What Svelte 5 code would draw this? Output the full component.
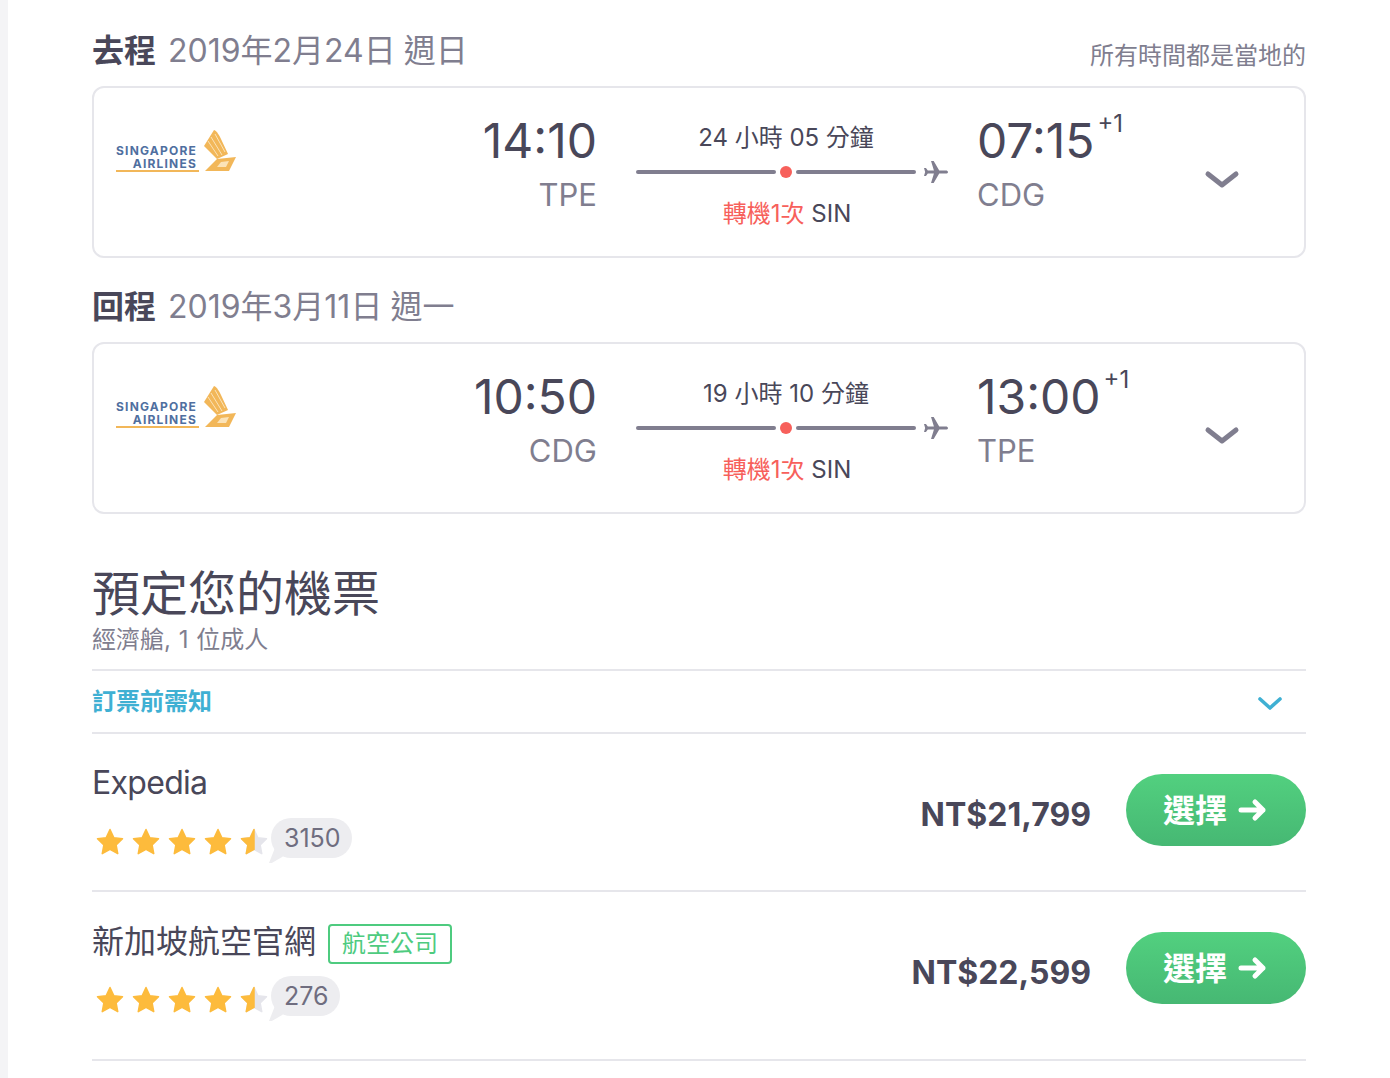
<script>
  const legs = [
    { label: '去程', date: '2019年2月24日 週日', note: '所有時間都是當地的', dep: '14:10', from: 'TPE', dur: '24 小時 05 分鐘', arr: '07:15', to: 'CDG' },
    { label: '回程', date: '2019年3月11日 週一', note: '', dep: '10:50', from: 'CDG', dur: '19 小時 10 分鐘', arr: '13:00', to: 'TPE' }
  ];
  const offers = [
    { name: '', latin: 'Expedia', tag: '', price: 'NT$21,799', count: '3150' },
    { name: '新加坡航空官網', latin: '', tag: '航空公司', price: 'NT$22,599', count: '276' }
  ];
  const star = 'M12 2l3 6.500 7 .9-5.100 4.900 1.300 7L12 17.900l-6.200 3.400 1.300-7L2 9.400l7-.9z';
</script>

<div class="page">
  <main class="main">
    {#each legs as leg}
      <section class="leg">
        <header class="leg-head">
          <h2><b>{leg.label}</b><span>{leg.date}</span></h2>
          {#if leg.note}<small>{leg.note}</small>{/if}
        </header>
        <div class="card">
          <div class="logo">
            <div class="logo-text"><span>SINGAPORE</span><span>AIRLINES</span></div>
            <svg class="wing" width="34" height="44" viewBox="0 0 34 44">
              <path d="M11 2c3 1 5 5 7 9l7 15-11 5L1 18z" fill="#f2b759"/>
              <path d="M8 9l11 18M5 13l10 15M12 6l10 18" stroke="#fbe3b8" stroke-width="1" fill="none"/>
              <path d="M14 31l19-2-7 14H2z" fill="#f2b759"/>
              <path d="M14 39h9l3-6-8 1z" fill="#fbe3b8"/>
            </svg>
          </div>
          <div class="time dep">
            <div class="clock">{leg.dep}</div>
            <div class="code">{leg.from}</div>
          </div>
          <div class="route">
            <div class="dur">{leg.dur}</div>
            <div class="line">
              <i></i><em></em><i></i>
              <svg width="24" height="26" viewBox="2 1 20.800 22"><path d="M22.800 12c0-.9-.9-1.400-1.800-1.400h-5.800L10.400 2.500H8.100l2.500 8.100H5.300L3.700 8.500H2l1 3.500-1 3.500h1.700l1.600-2.100h5.300l-2.500 8.100h2.300l4.800-8.100H21c.9 0 1.800-.5 1.800-1.400z" fill="#807e8f"/></svg>
            </div>
            <div class="stop"><span>轉機1次</span> SIN</div>
          </div>
          <div class="time arr">
            <div class="clock">{leg.arr}<sup>+1</sup></div>
            <div class="code">{leg.to}</div>
          </div>
          <svg class="chev" width="36" height="20" viewBox="0 0 36 20"><path d="M4 4l14 11L32 4" fill="none" stroke="#807e8f" stroke-width="5" stroke-linecap="round" stroke-linejoin="round"/></svg>
        </div>
      </section>
    {/each}

    <section class="book">
      <h1>預定您的機票</h1>
      <p>經濟艙, 1 位成人</p>
    </section>

    <div class="notice">
      <span>訂票前需知</span>
      <svg class="notice-chev" width="28" height="16" viewBox="0 0 28 16"><path d="M4 4l10 9L24 4" fill="none" stroke="#3fb0d3" stroke-width="3.600" stroke-linecap="round" stroke-linejoin="round"/></svg>
    </div>

    {#each offers as o}
      <div class="offer">
        <div class="who">
          <div class="name">{#if o.latin}<span class="latin">{o.latin}</span>{/if}{o.name}{#if o.tag}<span class="tag">{o.tag}</span>{/if}</div>
          <div class="rating">
            <div class="stars">
              {#each [0, 1, 2, 3] as s}
                <svg width="36" height="30" viewBox="-2.400 0 28.800 24"><path d={star} fill="#fdbb3c" stroke="#fdbb3c" stroke-width="1.200" stroke-linejoin="round"/></svg>
              {/each}
              <svg width="36" height="30" viewBox="-2.400 0 28.800 24">
                <path d={star} fill="#e5e5eb" stroke="#e5e5eb" stroke-width="1.200" stroke-linejoin="round"/>
                <path d="M12 2L9 8.500l-7 .9 5.100 4.900-1.300 7 6.200-3.400z" fill="#fdbb3c" stroke="#fdbb3c" stroke-width="1.200" stroke-linejoin="round"/>
              </svg>
            </div>
            <div class="bubble">{o.count}</div>
          </div>
        </div>
        <div class="price">{o.price}</div>
        <div class="btn">
          <span>選擇</span>
          <svg width="30" height="26" viewBox="0 0 30 26"><path d="M4 13h22M18 5l8 8-8 8" fill="none" stroke="#fff" stroke-width="5" stroke-linecap="round" stroke-linejoin="round"/></svg>
        </div>
      </div>
    {/each}
  </main>
</div>

<style>
  :global(body) {
    margin: 0;
    background: #fff;
  }
  .page {
    height: 1078px;
    overflow: hidden;
    border-left: 8px solid #f4f4f6;
    font-family: Inter, "Noto Sans CJK TC", sans-serif;
    color: #494759;
  }
  .main {
    width: 1214px;
    margin-left: 84px;
  }
  .leg {
    padding-bottom: 24px;
  }
  .leg:first-child {
    padding-top: 26px;
  }
  .leg:nth-child(2) {
    padding-bottom: 0;
  }
  .leg-head {
    height: 60px;
    box-sizing: border-box;
    padding-top: 5px;
    display: flex;
    justify-content: space-between;
    align-items: flex-start;
  }
  h2 {
    margin: 0;
    font-size: 32px;
    line-height: 40px;
    font-weight: 400;
    color: #807e8f;
    display: flex;
    gap: 12px;
  }
  h2 b {
    font-weight: 700;
    color: #494759;
  }
  h2 span {
    word-spacing: -1px;
  }
  small {
    font-size: 24px;
    line-height: 32px;
    margin-top: 9px;
    color: #807e8f;
  }
  .card {
    height: 172px;
    box-sizing: border-box;
    border: 2px solid #e6e6eb;
    border-radius: 12px;
    display: grid;
    grid-template-columns: 200px 302px 352px 228px 1fr;
  }
  .logo {
    display: flex;
    align-items: flex-end;
    padding: 40px 0 0 22px;
    height: 44px;
    gap: 4px;
  }
  .logo-text {
    width: 83px;
    flex: none;
    border-bottom: 2px solid #f2b759;
    display: flex;
    flex-direction: column;
    align-items: flex-end;
    font-size: 12px;
    line-height: 13px;
    font-weight: 700;
    color: #4f6f9f;
    letter-spacing: 1.200px;
    white-space: nowrap;
  }
  .logo-text span {
    margin-right: 2px;
  }
  .wing {
    flex: none;
  }
  .time {
    padding-top: 25px;
  }
  .dep {
    text-align: right;
    margin-right: -1px;
  }
  .clock {
    font-size: 48px;
    line-height: 56px;
    white-space: nowrap;
  }
  .clock sup {
    font-size: 24px;
    line-height: 0;
    vertical-align: 26px;
    margin-left: 3px;
  }
  .code {
    font-size: 31px;
    line-height: 40px;
    color: #807e8f;
    margin-top: 6px;
  }
  .route {
    margin-left: 40px;
    padding-top: 32px;
    text-align: center;
  }
  .dur {
    font-size: 24px;
    line-height: 36px;
    width: 300px;
  }
  .line {
    height: 26px;
    margin-top: 3px;
    display: flex;
    align-items: center;
  }
  .line i {
    width: 140px;
    height: 4px;
    border-radius: 2px;
    background: #807e8f;
    flex: none;
  }
  .line i:nth-of-type(2) {
    width: 120px;
  }
  .line em {
    width: 12px;
    height: 12px;
    border-radius: 50%;
    background: #f7605b;
    margin: 0 4px;
    flex: none;
  }
  .line svg {
    margin-left: 8px;
    flex: none;
  }
  .stop {
    width: 300px;
    margin-left: 1px;
    font-size: 24px;
    line-height: 36px;
    margin-top: 11px;
  }
  .stop span {
    color: #f7605b;
  }
  .arr {
    margin-left: 29px;
  }
  .chev {
    align-self: start;
    margin-top: 82px;
    margin-left: 28px;
  }
  .book {
    padding-top: 46px;
  }
  h1 {
    margin: 0;
    font-size: 48px;
    line-height: 68px;
    font-weight: 400;
  }
  .book p {
    margin: -2px 0 0;
    font-size: 24px;
    line-height: 28px;
    color: #807e8f;
    padding-bottom: 15px;
    word-spacing: 1px;
  }
  .notice {
    height: 61px;
    border-top: 2px solid #e6e6eb;
    border-bottom: 2px solid #e6e6eb;
    display: flex;
    align-items: center;
    justify-content: space-between;
    padding-right: 22px;
    color: #3fb0d3;
    font-size: 24px;
    font-weight: 700;
  }
  .notice span {
    margin-top: -4px;
  }
  .notice-chev {
    margin-top: 2px;
  }
  .offer {
    height: 156px;
    border-bottom: 2px solid #e6e6eb;
    display: flex;
    align-items: flex-start;
  }
  .offer:last-child {
    height: 167px;
  }
  .who {
    flex: 1;
    padding-top: 30px;
  }
  .name {
    height: 40px;
    font-size: 32px;
    line-height: 40px;
    display: flex;
    align-items: center;
    gap: 12px;
  }
  .latin {
    letter-spacing: -0.700px;
    margin-top: -2px;
  }
  .tag {
    font-size: 24px;
    line-height: 36px;
    padding: 0 12px;
    border: 2px solid #4ecb7f;
    border-radius: 4px;
    color: #4ecb7f;
    margin-top: 4px;
  }
  .rating {
    display: flex;
    align-items: flex-start;
    margin-top: 14px;
  }
  .stars {
    display: flex;
    margin-top: 9px;
  }
  .bubble {
    position: relative;
    height: 40px;
    line-height: 40px;
    font-size: 25px;
    padding: 0 11px 0 13px;
    border-radius: 20px;
    background: #ededf0;
    color: #6f6d7f;
    margin-left: -1px;
  }
  .bubble::after {
    content: "";
    position: absolute;
    left: -2px;
    bottom: -5px;
    width: 14px;
    height: 16px;
    background: #ededf0;
    clip-path: polygon(45% 0, 100% 60%, 20% 100%, 0 100%);
  }
  .price {
    font-size: 32px;
    line-height: 40px;
    font-weight: 700;
    margin: 61px 35px 0 0;
  }
  .btn {
    width: 180px;
    height: 72px;
    margin-top: 40px;
    box-sizing: border-box;
    padding-right: 2px;
    border-radius: 36px;
    background: linear-gradient(#52d07f, #46b873);
    color: #fff;
    display: flex;
    align-items: center;
    justify-content: center;
    gap: 10px;
    font-size: 32px;
    font-weight: 700;
  }
  .btn span {
    margin-top: -4px;
  }
</style>
